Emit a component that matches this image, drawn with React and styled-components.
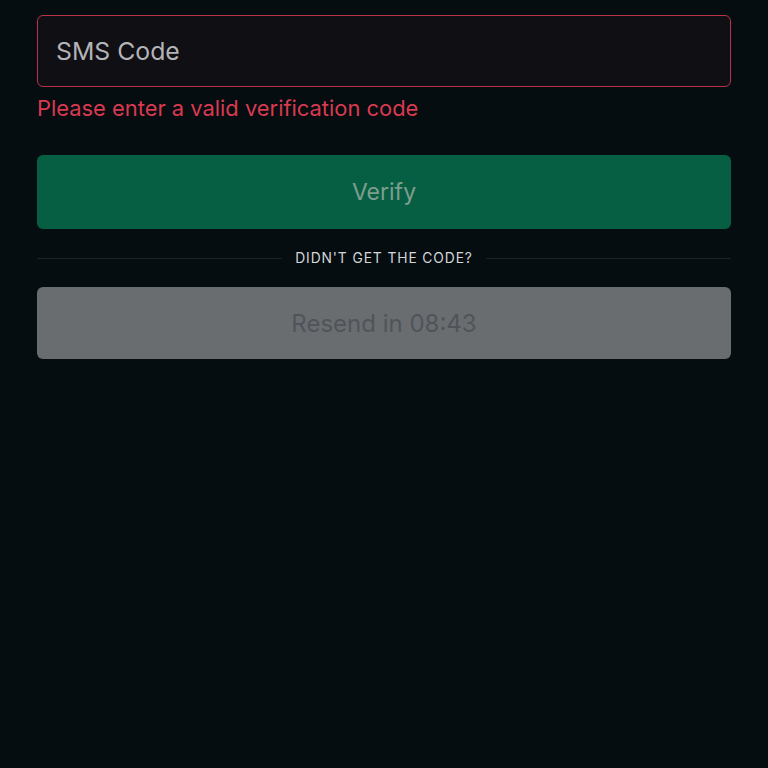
import React, { useState } from "react";
import styled, { createGlobalStyle } from "styled-components";

const GlobalStyle = createGlobalStyle`
  html, body {
    margin: 0;
    padding: 0;
    background: #060d11;
    font-family: Inter, "Noto Sans", sans-serif;
  }
`;

const Page = styled.div`
  min-height: 768px;
  background: #060d11;
  padding: 15px 37px 0;
  box-sizing: border-box;
  display: flex;
  flex-direction: column;
`;

const CodeInput = styled.input`
  box-sizing: border-box;
  width: 100%;
  height: 72px;
  padding: 0 18px;
  border: 1.5px solid ${(p) => (p.$invalid ? "#b8334a" : "#2a2f36")};
  border-radius: 6px;
  background: #0f0f14;
  color: #e6e6e6;
  font-family: inherit;
  font-size: 24.8px;
  outline: none;

  &::placeholder {
    color: #b4b4b8;
  }
`;

const ErrorText = styled.div`
  margin-top: 7px;
  margin-bottom: 33px;
  color: #d93a4f;
  font-size: 21.9px;
  line-height: 28px;
`;

const ActionButton = styled.button`
  box-sizing: border-box;
  width: 100%;
  height: ${(p) => p.$height || 74}px;
  border: 0;
  border-radius: 6px;
  background: ${(p) => p.$bg};
  color: ${(p) => p.$fg};
  font-family: inherit;
  font-size: ${(p) => p.$size || 23}px;
  cursor: default;
`;

const Divider = styled.div`
  display: flex;
  align-items: center;
  gap: 13px;
  margin: 21px 0;
  line-height: 16px;
  color: #d4d6d8;
  font-size: 13.8px;
  letter-spacing: 0.9px;
  white-space: nowrap;

  &::before,
  &::after {
    content: "";
    flex: 1;
    height: 1px;
    background: #1c2329;
  }
`;

export default function App() {
  const [code, setCode] = useState("");
  const [seconds] = useState(8 * 60 + 43);
  const mm = String(Math.floor(seconds / 60)).padStart(2, "0");
  const ss = String(seconds % 60).padStart(2, "0");

  return (
    <>
      <GlobalStyle />
      <Page>
        <CodeInput
          $invalid
          placeholder="SMS Code"
          value={code}
          onChange={(e) => setCode(e.target.value)}
        />
        <ErrorText>Please enter a valid verification code</ErrorText>
        <ActionButton $bg="#065f42" $fg="#7d9e8e">
          Verify
        </ActionButton>
        <Divider>DIDN'T GET THE CODE?</Divider>
        <ActionButton $bg="#6a6d70" $fg="#50545a" $height={72} $size={24} disabled>
          Resend in {mm}:{ss}
        </ActionButton>
      </Page>
    </>
  );
}
